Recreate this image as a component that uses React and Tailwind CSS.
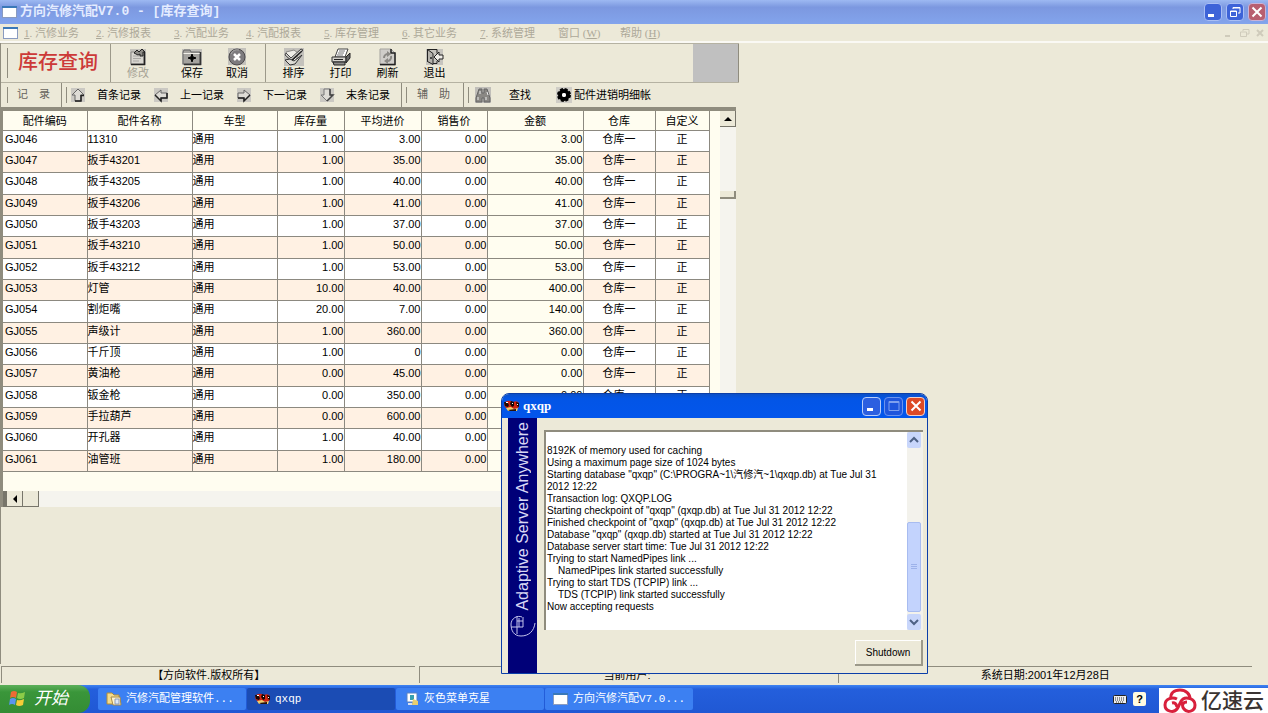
import React from "react";

const menus = [
  { key: "1", label: "汽修业务", width: "w-[72px]" },
  { key: "2", label: "汽修报表", width: "w-[78px]" },
  { key: "3", label: "汽配业务", width: "w-[72px]" },
  { key: "4", label: "汽配报表", width: "w-[78px]" },
  { key: "5", label: "库存管理", width: "w-[78px]" },
  { key: "6", label: "其它业务", width: "w-[78px]" },
  { key: "7", label: "系统管理", width: "w-[78px]" },
];

const columns = [
  { title: "配件编码", width: "w-[84px]" },
  { title: "配件名称", width: "w-[105px]" },
  { title: "车型", width: "w-[85px]" },
  { title: "库存量", width: "w-[67px]" },
  { title: "平均进价", width: "w-[77px]" },
  { title: "销售价", width: "w-[66px]" },
  { title: "金额", width: "w-[96px]" },
  { title: "仓库", width: "w-[72px]" },
  { title: "自定义", width: "w-[54px]" },
];

const parts = [
  ["GJ046", "11310", "1.00", "3.00", "3.00"],
  ["GJ047", "扳手43201", "1.00", "35.00", "35.00"],
  ["GJ048", "扳手43205", "1.00", "40.00", "40.00"],
  ["GJ049", "扳手43206", "1.00", "41.00", "41.00"],
  ["GJ050", "扳手43203", "1.00", "37.00", "37.00"],
  ["GJ051", "扳手43210", "1.00", "50.00", "50.00"],
  ["GJ052", "扳手43212", "1.00", "53.00", "53.00"],
  ["GJ053", "灯管", "10.00", "40.00", "400.00"],
  ["GJ054", "割炬嘴", "20.00", "7.00", "140.00"],
  ["GJ055", "声级计", "1.00", "360.00", "360.00"],
  ["GJ056", "千斤顶", "1.00", "0", "0.00"],
  ["GJ057", "黄油枪", "0.00", "45.00", "0.00"],
  ["GJ058", "钣金枪", "0.00", "350.00", "0.00"],
  ["GJ059", "手拉葫芦", "0.00", "600.00", "0.00"],
  ["GJ060", "开孔器", "1.00", "40.00", "40.00"],
  ["GJ061", "油管班", "1.00", "180.00", "180.00"],
];

const serverLog = `
8192K of memory used for caching
Using a maximum page size of 1024 bytes
Starting database "qxqp" (C:\\PROGRA~1\\汽修汽~1\\qxqp.db) at Tue Jul 31
2012 12:22
Transaction log: QXQP.LOG
Starting checkpoint of "qxqp" (qxqp.db) at Tue Jul 31 2012 12:22
Finished checkpoint of "qxqp" (qxqp.db) at Tue Jul 31 2012 12:22
Database "qxqp" (qxqp.db) started at Tue Jul 31 2012 12:22
Database server start time: Tue Jul 31 2012 12:22
Trying to start NamedPipes link ...
    NamedPipes link started successfully
Trying to start TDS (TCPIP) link ...
    TDS (TCPIP) link started successfully
Now accepting requests`;

const WindowIcon = () => (
  <svg className="h-3 w-4 shrink-0" viewBox="0 0 16 12">
    <rect x="0.5" y="0.5" width="14" height="11" fill="#fff" stroke="#8a9bc0" />
    <rect x="0" y="0" width="15" height="2" fill="#3a78b8" />
  </svg>
);

const BugIcon = () => (
  <svg className="h-3.5 w-4 shrink-0" viewBox="0 0 16 14">
    <path d="M1 3q3-2 6-1l2 1q4-2 6 1l0 4-3 2-10-1-2-3z" fill="#d02410" />
    <path d="M0 3l3 0 2 3-1 2-3-1zM7 2l3 1 0 4-2 1-2-3zM12 3l3 1 0 4-2-1z" fill="#160808" />
    <path d="M2 3h2v1H2zM8 4h1v1H8zM13 5h1v1h-1z" fill="#fff" />
    <path d="M2 9l5-1 3 2 4-1-1 3-4 0-5 0z" fill="#f0d070" />
    <path d="M4 11l8-1 0 2-6 0z" fill="#281008" />
  </svg>
);

const EditIcon = () => (
  <svg className="size-[18px]" viewBox="0 0 18 18">
    <rect x="1" y="1" width="16" height="16" fill="#c4c2bc" />
    <path d="M2 4h13v12H2z" fill="#d8d6d0" stroke="#8a8884" />
    <path d="M15.500 4v12.500H2" fill="none" stroke="#222" strokeWidth="1.500" />
    <path d="M4 8h8M4 10.500h8M4 13h6" stroke="#aaa8a4" />
    <path d="M5 5l3-3 2 2 3-3 3 3h-2v4h-3V6l-2 1z" fill="#8d8b86" stroke="#222" />
  </svg>
);

const SaveIcon = () => (
  <svg className="h-[18px] w-5" viewBox="0 0 20 18">
    <rect x="0" y="1" width="20" height="16" fill="#c2c0bb" />
    <path d="M1 4l1-2h6l1 2h9v12H1z" fill="#a5a39f" stroke="#666" />
    <path d="M1.500 5.500h17" stroke="#f2f0ea" />
    <path d="M18.500 4v12.500H2" fill="none" stroke="#333" strokeWidth="1.500" />
    <path d="M10 6l1 3 3 1-3 1-1 3-1-3-3-1 3-1z" fill="#000" stroke="#000" />
  </svg>
);

const CancelIcon = () => (
  <svg className="size-[18px]" viewBox="0 0 18 18">
    <rect width="18" height="17" fill="#c4c2bc" />
    <circle cx="9" cy="9" r="8" fill="#7d7b7e" stroke="#4a484a" />
    <path d="M3 6a7 7 0 0 1 8-4" fill="none" stroke="#aaa" />
    <path d="M6 6l6 6M12 6l-6 6" stroke="#fff" strokeWidth="2.500" />
  </svg>
);

const SortIcon = () => (
  <svg className="h-[18px] w-5" viewBox="0 0 20 18">
    <rect width="20" height="18" fill="#c4c2bc" />
    <path d="M2 4l8-2 4 3-2 9-6 2z" fill="#efede7" stroke="#8a8884" />
    <path d="M2 5l5 5L17 1l2 1L8 13 1 7z" fill="#d4d2cc" stroke="#444" />
    <path d="M1 12l5-1 4 2 8-6-7 9-5 1z" fill="#dddbd5" stroke="#333" />
    <path d="M8 12l10-9" stroke="#222" strokeWidth="1.500" />
  </svg>
);

const PrintIcon = () => (
  <svg className="h-[18px] w-5" viewBox="0 0 20 18">
    <path d="M7 1h10l-3 8H4z" fill="#fff" stroke="#444" />
    <path d="M8 3h6M7 5h6M6 7h6" stroke="#777" />
    <path d="M1 9h14v5H1z" fill="#d4d2cc" stroke="#333" />
    <path d="M15 9l4-4v5l-4 5z" fill="#666" stroke="#222" />
    <path d="M2 14h12v3H3z" fill="#8d8b88" stroke="#222" />
    <path d="M3 11.500h9" stroke="#222" />
  </svg>
);

const RefreshIcon = () => (
  <svg className="size-[18px]" viewBox="0 0 18 18">
    <path d="M1 1h11l4 4v12H1z" fill="#cfcdc9" stroke="#a5a39f" />
    <path d="M12 1v4h4v11.500H1" fill="none" stroke="#222" strokeWidth="1.500" />
    <path d="M5 10a4 4 0 0 1 4-4" fill="none" stroke="#8a8884" strokeWidth="2" />
    <path d="M12 8a4 4 0 0 1-4 5" fill="none" stroke="#8a8884" strokeWidth="2" />
    <path d="M8 3l4 3-4 3zM9 10v6l-4-3z" fill="#8a8884" />
  </svg>
);

const ExitIcon = () => (
  <svg className="size-[18px]" viewBox="0 0 18 18">
    <path d="M0 1h17v16H0z" fill="#c6c4be" />
    <path d="M1 1.500h10v4M11 13v2.500H7M1.500 1v13" fill="none" stroke="#222" />
    <path d="M1.500 1.500l5.500 4v11l-5.500-3z" fill="#b4b2ac" stroke="#222" />
    <path d="M5 9v2" stroke="#222" strokeWidth="1.500" />
    <path d="M8 9l5-5v3h4v4h-4v3z" fill="#efede7" stroke="#222" />
  </svg>
);

const ArrowIcon = ({ children }) => (
  <svg className="size-4" viewBox="0 0 16 16">
    <rect x="1" y="1" width="14" height="14" fill="#cbc9c3" />
    {children}
  </svg>
);

const ArrowUp = () => (
  <ArrowIcon>
    <path d="M8 2l6 6h-3v6H5V8H2z" fill="#dedcd6" stroke="#666" />
    <path d="M14 8.500h-3V14H5" fill="none" stroke="#222" strokeWidth="1.500" />
  </ArrowIcon>
);

const ArrowLeft = () => (
  <ArrowIcon>
    <path d="M2 8l6-5v3h6v5H8v3z" fill="#dedcd6" stroke="#666" />
    <path d="M14 6v5H8v3L2 8" fill="none" stroke="#222" strokeWidth="1.500" />
  </ArrowIcon>
);

const ArrowRight = () => (
  <ArrowIcon>
    <path d="M14 8L8 3v3H2v5h6v3z" fill="#dedcd6" stroke="#666" />
    <path d="M2 11h6v3l6-6" fill="none" stroke="#222" strokeWidth="1.500" />
  </ArrowIcon>
);

const ArrowDown = () => (
  <ArrowIcon>
    <path d="M8 14L2 8h3V2h6v6h3z" fill="#dedcd6" stroke="#777" />
    <path d="M11 2v6h3l-6 6" fill="none" stroke="#444" strokeWidth="1.500" />
  </ArrowIcon>
);

const BinocularsIcon = () => (
  <svg className="size-4" viewBox="0 0 16 16">
    <rect width="16" height="16" fill="#c0beb9" />
    <path d="M4 2h3v4h2V2h3l3 9v4H9v-4H7v4H1v-4z" fill="#8a8884" stroke="#666" />
    <path d="M3 10v3M11 10v3M5 4v3M12 5l1 3" stroke="#eee" />
  </svg>
);

const GearIcon = () => (
  <svg className="size-4" viewBox="0 0 16 16">
    <rect width="16" height="16" fill="#cfcdc6" />
    <circle cx="8" cy="8" r="4" fill="none" stroke="#000" strokeWidth="4" />
    <circle cx="8" cy="8" r="6" fill="none" stroke="#000" strokeWidth="2" strokeDasharray="3 1.700" />
    <circle cx="8" cy="8" r="2" fill="#fff" />
  </svg>
);

const editTools = [
  { label: "修改", icon: EditIcon, width: "w-[54px]", disabled: true },
  { label: "保存", icon: SaveIcon, width: "w-[54px]" },
  { label: "取消", icon: CancelIcon, width: "w-9" },
];

const viewTools = [
  { label: "排序", icon: SortIcon, width: "w-[47px]" },
  { label: "打印", icon: PrintIcon, width: "w-[47px]" },
  { label: "刷新", icon: RefreshIcon, width: "w-[47px]" },
  { label: "退出", icon: ExitIcon, width: "w-[47px]" },
];

const recordTools = [
  { label: "首条记录", icon: ArrowUp },
  { label: "上一记录", icon: ArrowLeft },
  { label: "下一记录", icon: ArrowRight },
  { label: "末条记录", icon: ArrowDown },
];

const ToolButton = ({ tool }) => (
  <button
    disabled={tool.disabled}
    className={`flex flex-col items-center pt-1 text-[11px] leading-[14px] disabled:text-[#a5a294] ${tool.width}`}
  >
    <tool.icon />
    {tool.label}
  </button>
);

const Grip = () => <div className="my-1 w-px shrink-0 bg-[#8f8c7e]" />;

const TitleBar = () => (
  <header className="flex h-6 items-center bg-linear-to-b from-[#9db9f2] via-[#7c98e0] via-30% to-[#83a4ec] pr-0.5 pl-0.5">
    <WindowIcon />
    <h1 className="ml-0.5 flex-1 font-[Liberation_Mono,Noto_Sans_CJK_SC,monospace] text-[13px] leading-6 font-bold text-[#e4ecff]">
      方向汽修汽配V7.0 - [库存查询]
    </h1>
    <div className="flex gap-1">
      <button aria-label="最小化" className="flex size-[18px] items-center justify-center rounded-sm border border-[#a9bef4] bg-[#3d63d8]">
        <svg className="size-3" viewBox="0 0 12 12"><path d="M1 9.500h6" stroke="#fff" strokeWidth="3" /></svg>
      </button>
      <button aria-label="还原" className="flex size-[18px] items-center justify-center rounded-sm border border-[#a9bef4] bg-[#3d63d8]">
        <svg className="size-3" viewBox="0 0 12 12" fill="none" stroke="#fff">
          <path d="M4 3V1.500h7V7H9M4 2h7" />
          <path d="M1.500 5h6v5.500h-6zM1.500 5.500h6" />
        </svg>
      </button>
      <button aria-label="关闭" className="flex size-[18px] items-center justify-center rounded-sm border border-[#c9b3d8] bg-[#b85f70]">
        <svg className="size-3" viewBox="0 0 12 12"><path d="M1.500 1.500l9 9M10.500 1.500l-9 9" stroke="#fff" strokeWidth="2" /></svg>
      </button>
    </div>
  </header>
);

const MenuBar = () => (
  <nav className="flex h-[19px] items-center border-b-2 border-[#faf9f4] pr-1 pl-[3px] font-[Liberation_Serif,Noto_Sans_CJK_SC,serif] text-[11px] leading-4 text-[#aca899]">
    <WindowIcon />
    <div className="flex flex-1 pl-[5px]">
      {menus.map((menu) => (
        <button key={menu.key} className={`text-left whitespace-nowrap ${menu.width}`}>
          <u>{menu.key}</u>. {menu.label}
        </button>
      ))}
      <button className="w-[62px] text-left">窗口 (<u>W</u>)</button>
      <button className="text-left">帮助 (<u>H</u>)</button>
    </div>
    <svg className="h-2.5 w-10" viewBox="0 0 40 10" fill="none" stroke="#cfcbbb">
      <path d="M1 8h5" strokeWidth="2" />
      <path d="M19 3V1.500h6V6h-2M16.500 4h6v4.500h-6z" />
      <path d="M33 2l6 6M39 2l-6 6" strokeWidth="2" />
    </svg>
  </nav>
);

const MainToolbar = () => (
  <div className="flex h-10 w-[738px] border-y border-[#b5b2a2]">
    <div className="flex w-[110px] border-r border-[#9c998a] pl-[6px]">
      <Grip />
      <h2 className="pl-2.5 text-xl leading-9 font-medium text-[#cc3a38]">库存查询</h2>
    </div>
    <div className="flex w-[155px] border-r border-[#9c998a]">
      {editTools.map((tool) => <ToolButton key={tool.label} tool={tool} />)}
    </div>
    <div className="flex flex-1 pl-1">
      {viewTools.map((tool) => <ToolButton key={tool.label} tool={tool} />)}
    </div>
    <div className="w-[46px] border-r border-[#8f8c7e] bg-[#c0c0c0]" />
  </div>
);

const RecordToolbar = () => (
  <div className="flex h-6 text-[11px] leading-[22px] whitespace-nowrap">
    <div className="flex w-[61px] border-r border-[#8f8c7e] pl-[6px] text-[#66645c]">
      <Grip />
      <span className="pl-[9px]">记</span>
      <span className="pl-[11px]">录</span>
    </div>
    <div className="flex w-[340px] border-r border-[#8f8c7e] pl-1">
      <Grip />
      <div className="flex gap-3 pl-[3px]">
        {recordTools.map((tool) => (
          <button key={tool.label} className="flex items-center gap-[11px]">
            <tool.icon />
            {tool.label}
          </button>
        ))}
      </div>
    </div>
    <div className="flex w-[62px] border-r border-[#8f8c7e] pl-1 text-[#66645c]">
      <Grip />
      <span className="pl-2.5">辅</span>
      <span className="pl-[11px]">助</span>
    </div>
    <div className="flex pl-1">
      <Grip />
      <button className="flex items-center gap-[18px] pl-1.5"><BinocularsIcon />查找</button>
      <button className="flex items-center gap-0.5 pl-[25px]"><GearIcon />配件进销明细帐</button>
    </div>
  </div>
);

const PartsTable = () => (
  <table className="h-[361px] w-[706px] table-fixed border-collapse text-[11px] leading-4">
    <colgroup>
      {columns.map((column) => <col key={column.title} className={column.width} />)}
    </colgroup>
    <thead>
      <tr className="h-[19px] bg-[#fffdf0]">
        {columns.map((column) => (
          <th key={column.title} className="border-r border-b border-[#8c8980] p-0 pt-0.5 font-normal">{column.title}</th>
        ))}
      </tr>
    </thead>
    <tbody className="align-top">
      {parts.map(([code, name, stock, cost, amount]) => (
        <tr key={code} className="bg-white even:bg-[#fff1e3] *:border-r *:border-b *:border-[#8c8980] *:p-0">
          <td><span className="pl-0.5">{code}</span></td>
          <td>{name}</td>
          <td>通用</td>
          <td className="text-right">{stock}</td>
          <td className="text-right">{cost}</td>
          <td className="text-right">0.00</td>
          <td className="bg-[#fffdf0] text-right">{amount}</td>
          <td className="text-center">仓库一</td>
          <td className="text-center">正</td>
        </tr>
      ))}
    </tbody>
  </table>
);

const PartsPanel = () => (
  <section className="w-[735px] border-t-4 border-l-2 border-[#8f8c7e] bg-[#fffdf0]">
    <div className="flex justify-between">
      <div className="h-[380px]">
        <PartsTable />
      </div>
      <div className="flex w-4 flex-col bg-[#f5f4ee]">
        <button aria-label="向上滚动" className="flex h-4 items-center justify-center border-r border-b border-[#77756a] bg-[#ece9d8]">
          <svg className="h-1 w-2" viewBox="0 0 8 4"><path d="M0 4l4-4 4 4z" /></svg>
        </button>
        <div className="mt-16 h-2 border-r-2 border-b-2 border-[#8f8c7e] bg-[#ece9d8]" />
      </div>
    </div>
    <div className="flex h-4 bg-[#f5f4ee]">
      <div className="w-1 bg-[#77756a]" />
      <button aria-label="向左滚动" className="flex w-4 items-center justify-center border-r border-b border-[#77756a] bg-[#ece9d8]">
        <svg className="h-2 w-1" viewBox="0 0 4 8"><path d="M4 0L0 4l4 4z" /></svg>
      </button>
      <div className="w-4 border-r border-b border-[#77756a] bg-[#ece9d8]" />
    </div>
  </section>
);

const ServerDialog = () => (
  <div
    role="dialog"
    aria-label="qxqp"
    className="absolute top-[393px] left-[501px] flex h-[281px] w-[427px] flex-col overflow-hidden rounded-t-lg border border-[#0b3ea8] bg-[#ece9d8]"
  >
    <div className="flex h-6 items-center gap-[3px] bg-linear-to-b from-[#0b50c8] via-[#0355e6] via-20% to-[#0356ec] px-0.5">
      <BugIcon />
      <h2 className="flex-1 font-[Liberation_Serif,serif] text-[13px] leading-4 font-bold text-white">qxqp</h2>
      <button aria-label="Minimize" className="flex size-[19px] items-center justify-center rounded-sm border border-[#b8cdf8] bg-[#2c5fe0]">
        <svg className="size-3" viewBox="0 0 12 12"><path d="M1 9.500h6" stroke="#fff" strokeWidth="3" /></svg>
      </button>
      <button disabled aria-label="Maximize" className="flex size-[19px] items-center justify-center rounded-sm border border-[#6c93ec] bg-[#1f55dc]">
        <svg className="size-3" viewBox="0 0 12 12" fill="none" stroke="#7fa0ee"><path d="M1 1.500h10v9H1zM1 2.500h10" /></svg>
      </button>
      <button aria-label="Close" className="flex size-[19px] items-center justify-center rounded-sm border border-[#f0d0c8] bg-[#dd4a26]">
        <svg className="size-3" viewBox="0 0 12 12"><path d="M1.500 1.500l9 9M10.500 1.500l-9 9" stroke="#fff" strokeWidth="2" /></svg>
      </button>
    </div>
    <div className="flex flex-1 pl-1.5">
      <div className="flex w-[29px] flex-col items-center gap-1 bg-[#000078] pt-1 text-[#d8d8f4]">
        <div className="rotate-180 text-base leading-6 whitespace-nowrap [writing-mode:vertical-rl]">
          Adaptive Server Anywhere
        </div>
        <svg className="h-6 w-[26px]" viewBox="0 0 26 24" fill="none" stroke="#c4c4ec">
          <path d="M12 2a8 8 0 0 0-11 7c0 7 3 12 10 12 8 0 13-5 14-13" />
          <path d="M1 12h12V2M7 1v18M7 6h6M9 3v9" />
        </svg>
      </div>
      <div className="flex flex-1 flex-col items-end gap-2.5 pt-3 pr-1 pl-[7px]">
        <div className="flex h-[200px] w-full border-t-2 border-l-2 border-[#8f8c7e] bg-white">
          <textarea
            readOnly
            aria-label="Server messages"
            value={serverLog}
            className="flex-1 resize-none overflow-hidden bg-white pt-px pl-px text-[10px] leading-3 whitespace-pre outline-none"
          />
          <div className="flex w-4 flex-col bg-[#f3f2ec] pr-0.5">
            <button aria-label="Scroll up" className="flex h-4 items-center justify-center rounded-xs bg-[#c8d6fb]">
              <svg className="h-2 w-2.5" viewBox="0 0 10 8"><path d="M1 6l4-4 4 4" fill="none" stroke="#4d6185" strokeWidth="2" /></svg>
            </button>
            <div className="mt-[74px] flex flex-1 items-center justify-center rounded-xs border border-[#a8bcf0] bg-[#c3d3fd]">
              <svg className="h-2 w-2" viewBox="0 0 8 8"><path d="M1 1.500h6M1 3.500h6M1 5.500h6" stroke="#9db2ea" /></svg>
            </div>
            <button aria-label="Scroll down" className="mt-0.5 flex h-4 items-center justify-center rounded-xs bg-[#c8d6fb]">
              <svg className="h-2 w-2.5" viewBox="0 0 10 8"><path d="M1 2l4 4 4-4" fill="none" stroke="#4d6185" strokeWidth="2" /></svg>
            </button>
          </div>
        </div>
        <button className="h-[26px] w-[68px] border-r-2 border-b-2 border-[#9c998a] bg-[#ece9d8] text-[10px] shadow-[inset_1px_1px_0_#fff]">
          Shutdown
        </button>
      </div>
    </div>
  </div>
);

const StatusBar = () => (
  <footer className="flex gap-1 py-0.5 pr-4 pl-px text-center text-[11px] leading-4 *:flex-1 *:border-t *:border-l *:border-[#8f8c7e]">
    <div>【方向软件.版权所有】</div>
    <div>当前用户:</div>
    <div>系统日期:2001年12月28日</div>
  </footer>
);

const FolderIcon = () => (
  <svg className="size-4 shrink-0" viewBox="0 0 16 16">
    <path d="M1 2h5l2 2h5v9H1z" fill="#f4dc8c" stroke="#b08c38" />
    <path d="M5 6h9l1 8H7z" fill="#fff4cc" stroke="#a58a4a" />
    <path d="M9 8h4v5H9z" fill="#dce8f8" stroke="#8a9ab8" />
  </svg>
);

const ToolIcon = () => (
  <svg className="size-4 shrink-0" viewBox="0 0 16 16">
    <path d="M3 2h10v9H3z" fill="#fff" stroke="#5a82c0" />
    <path d="M6 4h4v5H6z" fill="#38a0b0" />
    <path d="M9 8l5 2v4H8z" fill="#e8ce70" />
    <path d="M4 12h4v2H4z" fill="#d8e0f0" />
  </svg>
);

const tasks = [
  { label: "汽修汽配管理软件...", icon: FolderIcon },
  { label: "qxqp", icon: BugIcon, active: true },
  { label: "灰色菜单克星", icon: ToolIcon },
  { label: "方向汽修汽配V7.0...", icon: WindowIcon },
];

const Taskbar = () => (
  <div className="flex h-7 items-stretch bg-linear-to-b from-[#3f84f2] via-[#245fdc] via-15% to-[#2058d4]">
    <button className="flex w-[90px] items-center gap-2 rounded-r-xl bg-linear-to-b from-[#5cb05a] via-[#3a963a] via-25% to-[#348c34] pl-2 text-[17px] leading-6 text-white italic">
      <svg className="size-[18px]" viewBox="0 0 18 18">
        <path d="M3 2q3-2 6 0L8 8q-3-2-6 0z" fill="#ee6a35" />
        <path d="M10 3q3 1 7-1l-1 6q-4 2-7 0z" fill="#8ccc48" />
        <path d="M2 9q3-2 6 0l-1 6q-3-2-6 0z" fill="#5a94f0" />
        <path d="M9 10q3 1 7-1l-1 6q-4 2-7 0z" fill="#f6cc38" />
      </svg>
      开始
    </button>
    <div className="flex flex-1 gap-px py-[3px] pl-2 font-[Liberation_Mono,Noto_Sans_CJK_SC,monospace] text-[11px] leading-4 text-white">
      {tasks.map((task) => (
        <button
          key={task.label}
          className={`flex w-[148px] items-center gap-1 overflow-hidden rounded-xs pl-2 whitespace-nowrap ${task.active ? "bg-[#1b4cb4]" : "bg-[#3c80f2]"}`}
        >
          <task.icon />
          {task.label}
        </button>
      ))}
    </div>
    <div className="flex w-[155px] items-center gap-1.5">
      <svg className="h-3 w-3.5" viewBox="0 0 14 12">
        <rect x="0.500" y="2.500" width="13" height="8" rx="1" fill="#eee" stroke="#222" />
        <path d="M2 5h10M2 7h10M3 9h8" stroke="#333" strokeDasharray="1 1" />
      </svg>
      <span className="flex h-3.5 w-[13px] items-center justify-center rounded-xs bg-[#fffbe0] text-[11px] font-bold text-black">?</span>
    </div>
  </div>
);

const Watermark = () => (
  <div className="absolute right-0 bottom-0 flex h-[25px] w-[109px] items-center gap-1 bg-white pl-1">
    <svg className="h-[25px] w-[34px] shrink-0" viewBox="0 0 34 25" fill="none" stroke="#d8203c" strokeWidth="3">
      <path d="M8 11C7 5 11 2 17 2s10 4 10 9" />
      <path d="M14 11C10 9 2 10 2 17s9 8 12 4 3-8 6-10 12-1 12 6-8 8-11 4-1-7 3-7" />
      <path d="M9 15q4-1 5 4" />
    </svg>
    <span className="text-[21px] leading-6 font-medium whitespace-nowrap text-[#3a3432]">亿速云</span>
  </div>
);

const App = () => {
  return (
    <div className="relative flex min-h-screen flex-col bg-[#ece9d8] font-[Liberation_Sans,Noto_Sans_CJK_SC,sans-serif] text-black">
      <TitleBar />
      <MenuBar />
      <main className="flex flex-1 flex-col border-l border-[#8f8c7e]">
        <MainToolbar />
        <RecordToolbar />
        <PartsPanel />
      </main>
      <StatusBar />
      <Taskbar />
      <ServerDialog />
      <Watermark />
    </div>
  );
};

export default App;
